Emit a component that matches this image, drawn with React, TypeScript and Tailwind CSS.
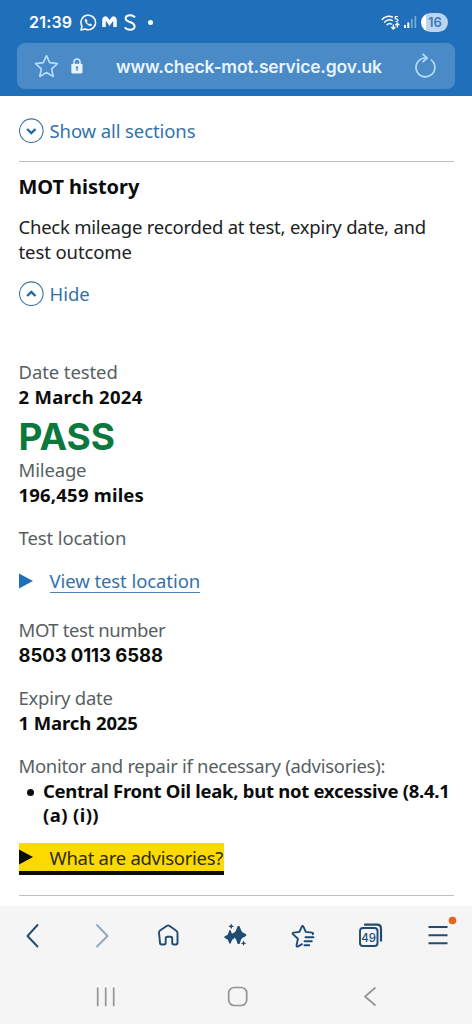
import React from "react";

const rowBase = "whitespace-nowrap h-[24.5px] leading-[24.5px]";

function Label({ children, className = "" }: { children: React.ReactNode; className?: string }) {
  return <div className={`${rowBase} text-[18.5px] text-[#585f63] ${className}`}>{children}</div>;
}

function Value({ children, className = "" }: { children: React.ReactNode; className?: string }) {
  return <div className={`${rowBase} font-bold text-[#0b0c0c] ${className}`}>{children}</div>;
}

function CircleChevron({ up = false }: { up?: boolean }) {
  return (
    <svg width="25" height="25" viewBox="0 0 25 25" fill="none" className="shrink-0">
      <circle cx="12.3" cy="12.7" r="11.8" stroke="#3c719f" strokeWidth="1.1" />
      <path d={up ? "M8.1 15 12.3 11 16.5 15" : "M8.1 11 12.3 15 16.5 11"} stroke="#2166a5" strokeWidth="2.4" />
    </svg>
  );
}

function StatusBar() {
  return (
    <div className="flex h-[43px] items-center pt-[1px] pl-[29px] pr-[24px] font-['Inter',sans-serif] text-white">
      <span className="w-[44px] whitespace-nowrap text-[16px] font-semibold tracking-[0.2px]">21:39</span>
      <svg className="ml-[7px] shrink-0" width="17" height="17" viewBox="0 0 17 17" fill="none" stroke="white" strokeWidth="1.5">
        <path d="M1 16l1-3.8A7.3 7.3 0 1 1 5 15z" strokeLinejoin="round" />
        <path d="M5.7 4.8c-1.6 1.5.2 4.5 2 5.8 1.7 1.3 3.4 1.8 4.3.3l-1.8-1.2-1 .8C8 10 7 9 6.6 7.7l.8-.8z" fill="white" strokeWidth=".5" />
      </svg>
      <svg className="ml-[5px] shrink-0" width="15" height="12" viewBox="0 0 15 12" fill="none">
        <path d="M2 11V4.2C2 1.7 3.8 1.5 5 3.4L7.5 7 10 3.4C11.3 1.5 13 1.7 13 4.2V11" stroke="white" strokeWidth="3.5" />
      </svg>
      <svg className="ml-[7px] shrink-0" width="12" height="17" viewBox="0 0 12 17" fill="none">
        <path d="M11 3.3C8.5.4 1.6.5 1.6 4.4c0 4 9 3.3 9 7.8 0 4.2-7.3 4.7-9.8 1.2" stroke="white" strokeWidth="2" />
      </svg>
      <i className="ml-[12px] h-[5px] w-[5px] rounded-full bg-white" />
      <svg className="ml-auto shrink-0" width="19" height="15" viewBox="0 0 19 15" fill="none" stroke="white" strokeWidth="1.5">
        <path d="M.8 4.8C3.8 1.2 8.3.4 12 2.4M3.2 7.5C5.7 4.8 9 4.2 11.8 5.9M5.7 10.1c1.6-1.6 3.7-1.9 5.2-.8" />
        <path d="M17 1.5h-2.7v2.3c3-.5 3.7 2.7.3 2.9" strokeWidth="1.2" />
        <path d="M12.3 9.5V14M10.3 12l2 2 2-2M16.3 12.5V8.2M14.3 10.2l2-2 2 2" strokeWidth="1.3" />
      </svg>
      <svg className="ml-[4px] shrink-0" width="13" height="14" viewBox="0 0 13 14">
        <path d="M0 10h2v3H0zM3.3 7.5h2V13h-2z" fill="white" />
        <path d="M7 4h1.7v9H7zM10.5 1h1.7v12h-1.7z" fill="#79a9d5" />
      </svg>
      <span className="ml-[4px] flex h-[19px] w-[27px] shrink-0 items-center justify-center rounded-full bg-[linear-gradient(90deg,#ffffff_17%,#bcd4ed_17%)] pl-[1px] text-[13px] leading-[19px] font-semibold text-[#3b79b8]">16</span>
    </div>
  );
}

function AddressBar() {
  return (
    <div className="mx-[17px] flex h-[46px] items-center rounded-[8px] bg-[#4a8ac6] text-[#e7f4ff]">
      <svg className="ml-[17px] shrink-0" width="25" height="25" viewBox="0 0 25 25" fill="none" stroke="#b5dcfc" strokeWidth="1.7" strokeLinejoin="round">
        <path d="m12.5 1.7 3.2 7 7.7.9-5.7 5.2 1.5 7.6-6.7-3.8-6.7 3.8 1.5-7.6L1.6 9.6l7.7-.9z" />
      </svg>
      <svg className="ml-[12px] shrink-0" width="12" height="16" viewBox="0 0 12 16">
        <path d="M3 7V4a3 3 0 0 1 6 0v3" fill="none" stroke="#d3eafe" strokeWidth="1.5" />
        <rect x=".3" y="5.8" width="11.2" height="9.7" rx="1.4" fill="#e4f3ff" />
        <path d="M4.8 8.4h2.3v1.7l-.5.6v2.2H5.4v-2.2l-.6-.6z" fill="#4a8ac6" />
      </svg>
      <span className="ml-[33px] w-[266px] pt-[2px] font-['Inter',sans-serif] text-[17.5px] font-semibold tracking-[-0.16px] whitespace-nowrap">www.check-mot.service.gov.uk</span>
      <svg className="ml-[32px] shrink-0" width="22" height="26" viewBox="0 0 22 26" fill="none" stroke="#b5dcfc" strokeWidth="1.7">
        <path d="M16.7 6.6A9.4 9.4 0 1 1 11.8 5M8.6 1l4.6 4-4.6 4.2" />
      </svg>
    </div>
  );
}

function BrowserNav() {
  return (
    <svg width="472" height="118" viewBox="0 0 472 118" fill="none" stroke="#204b73" strokeWidth="1.9" strokeLinecap="round" strokeLinejoin="round">
      <path d="M37.5 19 27.5 30l10 10.5" />
      <path d="m97 19 10.5 11L97 40.5" stroke="#91a8c0" />
      <path d="M159 26.5q0-1.3 1-2l6.6-4.5q1.5-1 3 0l6.4 4.5q1.5 1 1.5 2.5v9.8q0 1.7-1.7 1.7h-1.9q-1.7 0-1.7-1.7v-4.3q0-1.8-1.8-1.8h-2.9q-1.8 0-1.8 1.8v4.3q0 1.7-1.7 1.7h-2.3q-1.7 0-1.7-1.7z" />
      <g fill="#204b73" stroke="none">
        <path d="M230 24q1 0 1.3 2.2.6 2.7 2.5 3.2l1 1.7-1 1.7q-1.9.4-2.5 2.9-.3 2.1-1.3 2.1t-1.3-2.1q-.6-2.5-3-3.1-1.4-.5-1.4-1.4t1.4-1.4q2.4-.7 3-3.6.3-2.2 1.3-2.2z" />
        <path d="M238.6 19.8q1.4 0 1.8 2.8.9 3.7 3.9 4.7 2.1.7 2.1 1.8t-2.1 1.8q-3 .8-3.9 4.5-.5 2.7-1.8 2.7t-1.8-2.7q-.9-3.7-3.9-4.5-2.1-.7-2.1-1.8t2.1-1.8q3-1 3.9-4.7.4-2.8 1.8-2.8z" />
        <path d="m231.2 17.4.9 2 2 .9-2 .9-.9 2-.9-2-2-.9 2-.9zM243.5 34.4l.9 2 2 .9-2 .8-.9 2-.8-2-2-.8 2-.9z" />
      </g>
      <path d="m302 38.2-3.8 2.1q-2 .8-1.6-1.2l1.3-6.4-5-4.6q-1-1.2.7-1.5l5.8-.7 2.4-5.3q.8-1.5 1.6 0l2.4 5.3 6.2.7q1.8.3.8 1.6" />
      <path d="M305.5 31.2h8M304.5 35.2h7.3M304.5 39.2h4.8" />
      <rect x="360" y="22" width="17.5" height="18" rx="3" />
      <path d="M365 18.7h12q4 0 4 4v12" strokeWidth="2.2" />
      <text x="368.7" y="35.5" fontFamily="Inter, sans-serif" fontSize="11.5" fontWeight="500" textAnchor="middle" fill="#204b73" stroke="none">49</text>
      <path d="M428.5 21h19M428.5 29.2h19M428.5 37.3h19" strokeLinecap="butt" />
      <circle cx="452.5" cy="14.5" r="3.8" fill="#ed611e" stroke="none" />
      <g stroke="#949494" strokeWidth="1.7">
        <path d="M97.7 82v17.5M105.7 82v17.5M113.7 82v17.5" />
        <rect x="228.7" y="81.5" width="18" height="18" rx="5.5" />
        <path d="m375.5 81.5-10.5 9 10.5 9" strokeLinecap="butt" strokeLinejoin="miter" />
      </g>
    </svg>
  );
}

export default function App() {
  return (
    <div className="flex h-[1024px] w-[472px] flex-col overflow-hidden bg-white font-['Noto_Sans',sans-serif]">
      <header className="h-[96px] shrink-0 bg-[#1f6fba]">
        <StatusBar />
        <AddressBar />
      </header>
      <main className="h-[810px] shrink-0 px-[18.5px] pt-[22px]">
        <div className="flex h-[25px] items-center gap-[6px] text-[18.5px] leading-[25px] tracking-[-0.1px] whitespace-nowrap text-[#3472aa]">
          <CircleChevron />
          <span>Show all sections</span>
        </div>
        <div className="mt-[18px] h-px bg-[#bdbfc0]" />
        <h2 className="mt-[12px] h-[25px] text-[20px] leading-[25px] font-bold tracking-[-0.05px] whitespace-nowrap text-[#0b0c0c]">MOT history</h2>
        <div className="mt-[15px] h-[50px] text-[18.5px] leading-[25px] whitespace-nowrap text-[#202223]">
          <p className="tracking-[-0.23px]">Check mileage recorded at test, expiry date, and</p>
          <p className="tracking-[-0.1px]">test outcome</p>
        </div>
        <div className="mt-[17px] flex h-[25px] items-center gap-[6px] text-[18.5px] leading-[25px] whitespace-nowrap text-[#3472aa]">
          <CircleChevron up />
          <span>Hide</span>
        </div>
        <Label className="mt-[54px] tracking-[-0.1px]">Date tested</Label>
        <Value className="text-[18.5px] tracking-[0.3px]">2 March 2024</Value>
        <div className="mt-[9px] mb-[2px] h-[38px] font-['Inter',sans-serif] text-[37px] leading-[38px] font-bold text-[#0c783e]">PASS</div>
        <Label className="tracking-[-0.15px]">Mileage</Label>
        <Value className="text-[18.5px] tracking-[0.2px]">196,459 miles</Value>
        <Label className="mt-[19px] tracking-[-0.1px]">Test location</Label>
        <div className="mt-[18.5px] flex h-[24.5px] items-center whitespace-nowrap">
          <svg width="14" height="16" viewBox="0 0 14 16" className="mb-[1px] shrink-0"><path d="M0 .5 14 8 0 15.5z" fill="#1d70b8" /></svg>
          <span className="ml-[17px] border-b border-[#4c83b4] text-[18.5px] leading-[22.5px] tracking-[-0.08px] text-[#3472aa]">View test location</span>
        </div>
        <Label className="mt-[24.5px] tracking-[-0.4px]">MOT test number</Label>
        <Value className="font-['Inter',sans-serif] text-[18.5px] tracking-[-0.07px]">8503 0113 6588</Value>
        <Label className="mt-[19px] tracking-[-0.25px]">Expiry date</Label>
        <Value className="text-[18.5px] tracking-[-0.1px]">1 March 2025</Value>
        <Label className="mt-[19px] tracking-[-0.3px]">Monitor and repair if necessary (advisories):</Label>
        <div className="flex">
          <i className="mt-[10px] ml-[8px] h-[7px] w-[7px] shrink-0 rounded-full bg-[#0b0c0c]" />
          <div className="ml-[9.5px] text-[18.5px]">
            <Value className="tracking-[-0.28px]">Central Front Oil leak, but not excessive (8.4.1</Value>
            <Value className="tracking-[0.4px]">(a) (i))</Value>
          </div>
        </div>
        <div className="mt-[15.5px] flex h-[32px] w-[205px] items-center border-b-[4px] border-[#0b0c0c] bg-[#fbda00] whitespace-nowrap text-[#302a10]">
          <svg width="14" height="16" viewBox="0 0 14 16" className="shrink-0"><path d="M0 .5 14 8 0 15.5z" fill="#0b0c0c" /></svg>
          <span className="ml-[17px] text-[18.5px] leading-[25px] tracking-[-0.28px]">What are advisories?</span>
        </div>
        <div className="mt-[20px] h-px bg-[#bdbfc0]" />
      </main>
      <nav className="h-[118px] shrink-0 bg-[#f5f5f5]">
        <BrowserNav />
      </nav>
    </div>
  );
}
